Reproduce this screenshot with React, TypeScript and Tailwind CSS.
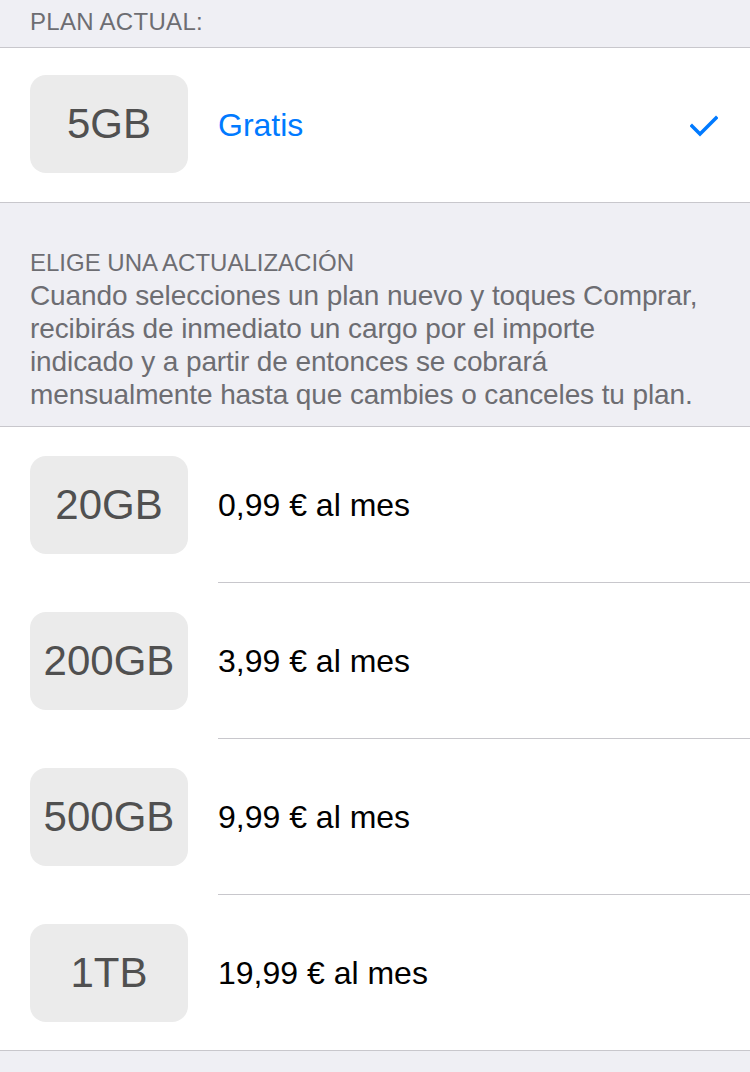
import React from "react";

const plans = [
  { size: "20GB", price: "0,99 € al mes" },
  { size: "200GB", price: "3,99 € al mes" },
  { size: "500GB", price: "9,99 € al mes" },
  { size: "1TB", price: "19,99 € al mes" },
];

function SizeBox({ label }: { label: string }) {
  return (
    <div className="w-[158px] h-[98px] shrink-0 rounded-[16px] bg-[#ebebeb] flex items-center justify-center text-[42px] text-[#505050] leading-none">
      {label}
    </div>
  );
}

export default function App() {
  return (
    <div
      className="w-[750px] min-h-[1072px] bg-[#efeff4]"
      style={{ fontFamily: '"Liberation Sans", Arial, sans-serif' }}
    >
      <div className="h-[48px] border-b border-[#c8c7cc] pl-[30px] pt-[8px] text-[24px] leading-[28px] tracking-[0.3px] text-[#6d6d72]">
        PLAN ACTUAL:
      </div>

      <div className="h-[155px] bg-white border-b border-[#c8c7cc] flex items-center pl-[30px] pr-[32px]">
        <div className="-mt-[2px]">
          <SizeBox label="5GB" />
        </div>
        <div className="ml-[30px] text-[32px] text-[#007aff] leading-none">Gratis</div>
        <div className="flex-1" />
        <svg width="28" height="22" viewBox="0 0 28 22" className="mt-[2px]">
          <path
            d="M2 11 L10 19 L26 3"
            fill="none"
            stroke="#007aff"
            strokeWidth="3.4"
            strokeLinecap="square"
          />
        </svg>
      </div>

      <div className="h-[224px] border-b border-[#c8c7cc] pl-[30px] pt-[46px] text-[#6d6d72]">
        <div className="text-[24px] leading-[28px]">ELIGE UNA ACTUALIZACIÓN</div>
        <div className="mt-[2px] text-[28px] leading-[33px] tracking-[-0.1px]">
          Cuando selecciones un plan nuevo y toques Comprar,
          <br />
          recibirás de inmediato un cargo por el importe
          <br />
          indicado y a partir de entonces se cobrará
          <br />
          mensualmente hasta que cambies o canceles tu plan.
        </div>
      </div>

      <div className="bg-white border-b border-[#c8c7cc]">
        {plans.map((p, i) => (
          <div
            key={p.size}
            className={`relative flex items-center pl-[30px] ${i < plans.length - 1 ? "h-[156px]" : "h-[155px]"}`}
          >
            <SizeBox label={p.size} />
            <div className="ml-[30px] text-[32px] text-black leading-none">{p.price}</div>
            {i < plans.length - 1 && (
              <div className="absolute left-[218px] right-0 bottom-0 h-px bg-[#c8c7cc]" />
            )}
          </div>
        ))}
      </div>
    </div>
  );
}
